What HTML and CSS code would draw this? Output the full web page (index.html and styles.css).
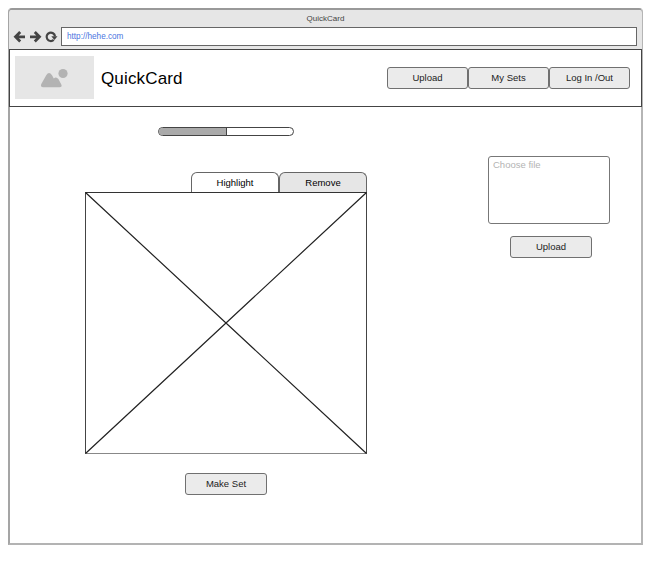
FILE: index.html
```
<!DOCTYPE html>
<html lang="en">
<head>
<meta charset="utf-8">
<title>QuickCard</title>
<link rel="stylesheet" href="styles.css">
</head>
<body>
<div class="window">
  <div class="chrome">
    <div class="title">QuickCard</div>
    <div class="toolbar">
      <svg class="tools" width="48" height="14" viewBox="0 0 48 14" fill="none" stroke="#444" stroke-width="2.800">
        <path d="M12 6.800H3M7.200 2L2.500 6.800l4.700 4.800"/>
        <path d="M17 6.800h9M21.800 2L26.500 6.800l-4.700 4.800"/>
        <path d="M40.700 9.900A4.200 4.200 0 1 1 42 6.300" stroke-width="2.200"/>
        <path d="M38.300 6.300h6.200l-3.100 3.700z" fill="#444" stroke="none"/>
      </svg>
      <div class="address">http://hehe.com</div>
    </div>
  </div>
  <header class="header">
    <div class="logo">
      <svg width="28" height="20" viewBox="0 0 28 20" fill="#b3b3b3">
        <circle cx="23" cy="5.500" r="4.600"/>
        <path d="M3.200 19.300Q0 19 1.300 16L6.200 7.200Q9 3 12 7.200L13.800 10.400Q16.200 8.200 18.400 11L21.300 16.500Q22.500 19 19.500 19.300Z"/>
      </svg>
    </div>
    <div class="brand">QuickCard</div>
    <nav class="nav">
      <div class="button">Upload</div>
      <div class="button">My Sets</div>
      <div class="button">Log In /Out</div>
    </nav>
  </header>
  <main class="content">
    <section class="editor">
      <div class="progress"><div class="progress-fill"></div></div>
      <div class="tabs">
        <div class="tab">Highlight</div>
        <div class="tab inactive">Remove</div>
      </div>
      <div class="preview">
        <svg width="282" height="262" viewBox="0 0 282 262" stroke="#222" stroke-width="1.200">
          <path d="M.5.5l281 261M281.500.5L.5 261.500"/>
        </svg>
      </div>
      <div class="button make">Make Set</div>
    </section>
    <section class="uploader">
      <div class="file">Choose file</div>
      <div class="button send">Upload</div>
    </section>
  </main>
</div>
</body>
</html>
```
FILE: styles.css
```
* {
  box-sizing: border-box;
}

body {
  margin: 0;
  padding: 8px;
  background: #fff;
  color: #222;
  font-family: "Liberation Sans", Arial, sans-serif;
  font-size: 9.5px;
}

svg {
  display: block;
}

.window {
  width: 635px;
  height: 537px;
  border: 2px solid;
  border-color: #999 #b5b5b5 #b3b3b3 #a5a5a5;
  border-radius: 4px 4px 0 0;
}

.chrome {
  height: 39px;
  margin: 0 -1px;
  background: #e6e6e6;
  border-radius: 3px 3px 0 0;
}

.title {
  height: 17px;
  line-height: 17px;
  text-align: center;
  font-size: 8px;
  color: #444;
}

.toolbar {
  display: flex;
  align-items: center;
  height: 19px;
  padding: 0 5px 0 4px;
}

.tools {
  flex: none;
}

.address {
  flex: 1;
  height: 19px;
  padding-left: 5px;
  border: 1px solid #666;
  background: #fff;
  color: #4a74e0;
  font-size: 8.2px;
  line-height: 17px;
}

.header {
  display: flex;
  align-items: center;
  height: 58px;
  margin: 0 -1px;
  padding: 0 11px 0 5px;
  border: 1px solid #444;
}

.logo {
  display: flex;
  align-items: center;
  justify-content: center;
  width: 79px;
  height: 43px;
  margin-top: -1px;
  padding: 0 2px 0 0;
  background: #e6e6e6;
}

.brand {
  margin: 1px 0 0 7px;
  color: #000;
  font-size: 17px;
  letter-spacing: 0.15px;
}

.nav {
  display: flex;
  margin-left: auto;
}

.button {
  width: 81px;
  height: 22px;
  border: 1px solid #707070;
  border-radius: 3px;
  background: #ebebeb;
  text-align: center;
  line-height: 20px;
}

.content {
  display: flex;
  align-items: flex-start;
}

.editor {
  display: flex;
  flex-direction: column;
  align-items: center;
  width: 282px;
  margin: 20px 0 0 75px;
}

.progress {
  width: 136px;
  height: 9px;
  overflow: hidden;
  border: 1px solid #444;
  border-radius: 5px;
}

.progress-fill {
  width: 68px;
  height: 100%;
  border-right: 1px solid #444;
  background: #aaa;
}

.tabs {
  display: flex;
  align-self: flex-end;
  margin-top: 36px;
}

.tab {
  width: 88px;
  height: 20px;
  border: 1px solid #666;
  border-bottom: 0;
  border-radius: 6px 6px 0 0;
  color: #000;
  text-align: center;
  line-height: 20px;
}

.inactive {
  background: #e6e6e6;
}

.preview {
  border-top: 1px solid #333;
  border-bottom: 1px solid #888;
  border-left: 1px solid #444;
  border-right: 1px solid #444;
  width: 282px;
  height: 262px;
}

.preview svg {
  margin: -1px;
}

.make {
  align-self: flex-start;
  width: 82px;
  margin: 19px 0 0 100px;
}

.uploader {
  display: flex;
  flex-direction: column;
  margin: 49px 0 0 121px;
}

.file {
  width: 122px;
  height: 68px;
  margin-bottom: 12px;
  padding-left: 4px;
  border: 1px solid #777;
  border-radius: 3px;
  color: #b3b3b3;
  line-height: 16px;
}

.send {
  width: 82px;
  margin-left: 22px;
}
```
